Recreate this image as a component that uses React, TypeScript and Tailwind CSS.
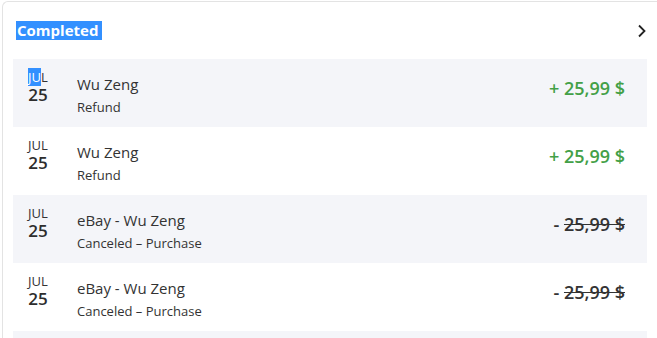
import React from "react";

const rows = [
  { name: "Wu Zeng", sub: "Refund", amount: "25,99 $", positive: true, sel: true },
  { name: "Wu Zeng", sub: "Refund", amount: "25,99 $", positive: true },
  { name: "eBay - Wu Zeng", sub: "Canceled – Purchase", amount: "25,99 $", positive: false },
  { name: "eBay - Wu Zeng", sub: "Canceled – Purchase", amount: "25,99 $", positive: false },
  { name: "", sub: "", amount: "", positive: false, empty: true },
];

export default function App() {
  return (
    <div
      className="w-[657px] h-[338px] overflow-hidden bg-white pt-[1px] pl-[2px]"
      style={{ fontFamily: '"Open Sans", "Noto Sans", sans-serif' }}
    >
      <div className="w-[700px] h-[400px] border-l border-t border-[#e3e3e3] rounded-tl-[6px] pl-[10px] text-[#2d2d2d]">
        <div className="w-[634px] flex justify-between pt-[19px] h-[57px] items-start">
          <span className="ml-[3px] bg-[#3390ff] text-white font-bold text-[15px] leading-[19px] px-[1px] pr-[4px]">
            Completed
          </span>
          <svg width="10" height="14" viewBox="0 0 10 14" className="mt-[3px]">
            <path d="M2 1.5 L7.5 7 L2 12.5" fill="none" stroke="#222" strokeWidth="1.8" />
          </svg>
        </div>
        <div className="w-[634px]">
          {rows.map((r, i) => (
            <div
              key={i}
              className={`h-[68px] flex items-start ${i % 2 === 0 ? "bg-[#f4f5f9]" : "bg-white"}`}
            >
              {!r.empty && (
                <>
                  <div className="w-[48px] flex flex-col items-center pt-[10px] ml-[1px]">
                    <span className="text-[13px] leading-[16px] text-[#333]">
                      {r.sel ? (
                        <>
                          <span className="bg-[#3390ff] text-white">JU</span>L
                        </>
                      ) : (
                        "JUL"
                      )}
                    </span>
                    <span className="text-[17px] leading-[19px] font-semibold text-[#2d2d2d]">25</span>
                  </div>
                  <div className="ml-[15px] pt-[15px] flex flex-col">
                    <span className="text-[15px] leading-[20px] text-[#333]">{r.name}</span>
                    <span className="text-[13px] leading-[18px] text-[#333] mt-[4px]">{r.sub}</span>
                  </div>
                  <div className="ml-auto mr-[22px] pt-[18px]">
                    {r.positive ? (
                      <span className="text-[18px] leading-[22px] font-semibold text-[#43a047]">+ {r.amount}</span>
                    ) : (
                      <span className="text-[18px] leading-[22px] font-semibold text-[#333]">
                        - <span className="line-through">{r.amount}</span>
                      </span>
                    )}
                  </div>
                </>
              )}
            </div>
          ))}
        </div>
      </div>
    </div>
  );
}
